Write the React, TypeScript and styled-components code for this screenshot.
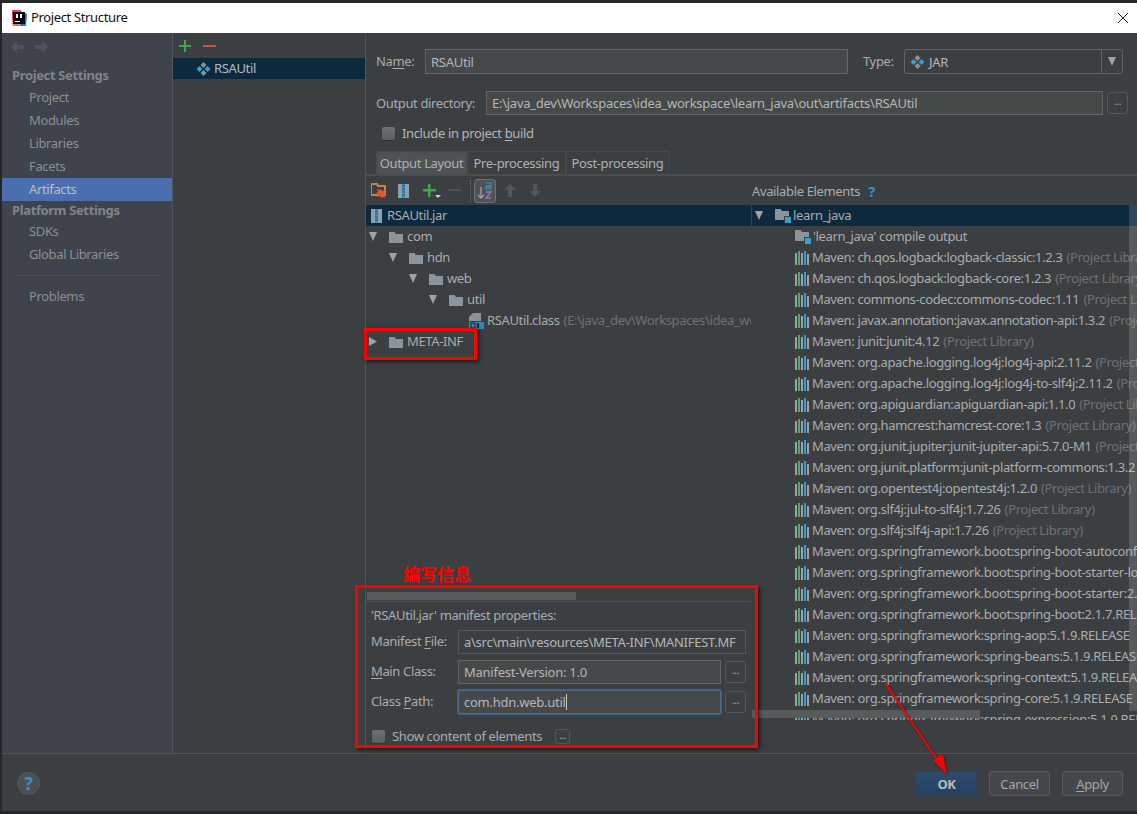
import React from "react";
import styled, { createGlobalStyle } from "styled-components";

const Global = createGlobalStyle`
  html, body { margin: 0; padding: 0; background: #262626; }
  body { font-family: "Noto Sans", "Liberation Sans", sans-serif; font-size: 13px; letter-spacing: -0.36px; color: #b4b7b9; }
  #root { width: 1137px; height: 814px; overflow: hidden; }
  u { text-underline-offset: 2px; text-decoration-thickness: 1px; }
`;

const Root = styled.div`
  position: relative; width: 1137px; height: 814px; box-sizing: border-box;
  padding: 3px 0 3px 2px; background: #262729; overflow: hidden;
`;
const Win = styled.div`display: flex; flex-direction: column; height: 808px; background: #3c3f41;`;
const TitleBar = styled.div`
  height: 30px; flex: none; background: #fff; color: #111; display: flex; align-items: center;
  padding-left: 8px; gap: 3px; font-size: 13px;
`;
const TitleText = styled.span`margin-top: -2px;`;
const CloseBtn = styled.svg`margin-left: auto; margin-right: 8px;`;
const Body = styled.div`display: flex; height: 720px; flex: none;`;

const Sidebar = styled.nav`
  width: 170px; flex: none; background: #3e434c; border-right: 1px solid #54575a; color: #8b9095;
`;
const NavArrows = styled.div`height: 32px; display: flex; align-items: center; gap: 11px; padding: 0 0 4px 9px; box-sizing: border-box;`;
const NavHeader = styled.div<{ $h: number }>`
  height: ${(p) => p.$h}px; line-height: ${(p) => p.$h}px; padding-left: 10px; font-weight: 700; color: #7f858b; font-size: 13px;
`;
const NavItem = styled.div<{ $active?: boolean }>`
  height: 23px; line-height: 23px; padding-left: 27px;
  background: ${(p) => (p.$active ? "#4b6eaf" : "transparent")};
  color: ${(p) => (p.$active ? "#b9c0cc" : "#8b9095")};
`;
const NavDivider = styled.div`height: 1px; margin: 9px 12px 9px 14px; background: #4c5057;`;

const Middle = styled.div`width: 192px; flex: none; border-right: 1px solid #515355; background: #3c3f41;`;
const MiddleTools = styled.div`height: 25px; display: flex; align-items: center; gap: 12px; padding-left: 6px;`;
const Selected = styled.div`
  height: 21px; background: #0d293e; color: #b4bcc2; display: flex; align-items: center; flex: none;
`;
const MiddleRow = styled(Selected)`padding-left: 23px; gap: 3px;`;
const MiddleName = styled.span`margin-top: -2px;`;

const Main = styled.div`flex: 1; min-width: 0; display: flex; flex-direction: column;`;
const FormRow = styled.div<{ $top: number; $h: number }>`
  display: flex; align-items: center; margin-top: ${(p) => p.$top}px; height: ${(p) => p.$h}px; padding-left: 10px; flex: none;
`;
const Label = styled.label<{ $w: number }>`width: ${(p) => p.$w}px; flex: none; white-space: nowrap; color: #a9adb0; margin-top: -2px;`;
const TypeLabel = styled(Label)`margin-left: 15px;`;
const OutputLabel = styled(Label)`margin-top: 0;`;
const Field = styled.div<{ $w: number; $focus?: boolean }>`
  width: ${(p) => p.$w}px; height: 100%; box-sizing: border-box; flex: none; padding: 0 5px; display: flex; align-items: center;
  background: #45494a; letter-spacing: -0.26px;
  border: 1px solid ${(p) => (p.$focus ? "#466d94" : "#646464")};
  border-radius: ${(p) => (p.$focus ? "2px" : "0")};
  box-shadow: ${(p) => (p.$focus ? "0 0 0 1px #3d6185" : "none")};
  color: #b4b7b9; white-space: nowrap; overflow: hidden;
`;
const ReadField = styled(Field)`background: #3c3f41; border-color: #565859;`;
const Caret = styled.span`display: inline-block; width: 1px; height: 16px; background: #c8c8c8;`;
const Combo = styled.div`
  width: 219px; height: 25px; box-sizing: border-box; display: flex; align-items: center; gap: 4px; padding-left: 5px;
  border: 1px solid #646464; border-radius: 3px; background: #3c3f41; color: #b4b7b9;
`;
const ComboArrow = styled.div`
  margin-left: auto; width: 20px; height: 100%; border-left: 1px solid #646464; display: flex; align-items: center; justify-content: center;
`;
const Triangle = styled.span<{ $right?: boolean }>`
  display: inline-block; flex: none; width: 8px; height: 9px; background: #a0a3a5;
  clip-path: ${(p) => (p.$right ? "polygon(0 0, 100% 50%, 0 100%)" : "polygon(0 0, 100% 0, 50% 100%)")};
`;
const DotsBtn = styled.button`
  width: 21px; height: 22px; flex: none; padding: 0 0 5px; margin: 0 0 0 4px; background: #3c3f41; color: #a9adb0; font-size: 10px; line-height: 10px;
  border: 1px solid #565859; border-radius: 3px; font-family: inherit; letter-spacing: inherit;
`;
const SmallDots = styled(DotsBtn)`width: 15px; height: 15px; margin-left: 6px; padding-bottom: 3px;`;
const Box = styled.span`
  width: 13px; height: 13px; flex: none; border-radius: 2px; background: linear-gradient(#6e7072, #5b5e60); box-shadow: 0 1px 1px #2d2f30;
`;
const CheckRow = styled(FormRow)`padding-left: 16px; gap: 7px;`;
const Tabs = styled.div`display: flex; height: 23px; margin-top: 8px; padding-left: 10px; flex: none; border-bottom: 2px solid #4a4d4f;`;
const Tab = styled.div<{ $on?: boolean; $w: number }>`
  width: ${(p) => p.$w}px; box-sizing: border-box; text-align: center; line-height: 23px; white-space: nowrap;
  background: ${(p) => (p.$on ? "#4e5254" : "#3c3f41")};
  border: 1px solid #47494b; border-bottom: none;
  color: #aeb1b3;
`;
const Split = styled.div`flex: 1; min-height: 0; display: flex;`;
const LeftPane = styled.div`width: 385px; flex: none; display: flex; flex-direction: column; min-width: 0;`;
const RightPane = styled.div`position: relative; width: 386px; flex: none; box-sizing: border-box; border-left: 1px solid #3c3f41; overflow: hidden; height: 544px;`;
const Tools = styled.div`height: 29px; display: flex; align-items: center; flex: none;`;
const LeftTree = styled.div`flex: 1; min-height: 0; overflow: hidden;`;
const Row = styled.div<{ $level: number }>`
  display: flex; align-items: center; height: 21px; white-space: nowrap; overflow: hidden;
  padding-left: ${(p) => 3 + p.$level * 20}px; color: #a9adb0;
`;
const JarRow = styled(Selected)`padding-left: 5px;`;
const RightSelRow = styled(Selected)`padding-left: 3px;`;
const ArrowSlot = styled.span`width: 20px; flex: none; display: flex;`;
const Name = styled.span<{ $ml?: number }>`margin: -2px 0 0 ${(p) => p.$ml ?? 4}px; color: #a9adb0;`;
const Hint = styled.span`color: #6f7274; margin: -2px 0 0 4px;`;
const HScroll = styled.div`height: 8px; width: 209px; margin-left: 1px; background: #585b5c; flex: none;`;
const ScrollGap = styled.div`height: 1px; background: #4c4f51; flex: none; margin-top: 1px;`;
const Manifest = styled.div`height: 151px; flex: none; padding: 3px 0 0 5px; box-sizing: border-box;`;
const MTitle = styled.div`height: 20px; line-height: 20px; color: #a9adb0;`;
const MRow = styled.div<{ $top: number }>`display: flex; align-items: center; height: 24px; margin-top: ${(p) => p.$top}px;`;
const MCheck = styled.div`display: flex; align-items: center; height: 20px; margin-top: 12px; padding-left: 1px; gap: 7px; color: #a9adb0;`;
const AvailTitle = styled.div`display: flex; align-items: center; gap: 8px; color: #a9adb0;`;
const QMark = styled.span`color: #3592c4; font-weight: 700; font-size: 15px;`;
const VScroll = styled.div`position: absolute; right: 0; top: 29px; bottom: 9px; width: 8px; background: rgba(255,255,255,.14);`;
const HScrollR = styled.div`position: absolute; left: 0; width: 228px; bottom: 2px; height: 8px; background: #585b5c;`;

const Footer = styled.footer`
  flex: 1; border-top: 1px solid #515355; display: flex; align-items: center; padding: 2px 14px 0 15px; gap: 12px;
`;
const Help = styled.div`
  width: 23px; height: 23px; border-radius: 50%; background: #4a5155; border: 1px solid #54595c; box-sizing: border-box;
  color: #3592c4; font-weight: 800; font-size: 17px; line-height: 21px; text-align: center; margin-right: auto;
`;
const Btn = styled.button<{ $primary?: boolean }>`
  width: 61px; height: 25px; padding: 0; border-radius: 3px; font-family: inherit; font-size: 13px; letter-spacing: inherit;
  font-weight: ${(p) => (p.$primary ? 700 : 400)};
  color: ${(p) => (p.$primary ? "#b9bcbe" : "#a4a7a9")};
  background: ${(p) => (p.$primary ? "linear-gradient(#2f4b6e, #26405f)" : "#45484a")};
  border: 1px solid ${(p) => (p.$primary ? "#2b4462" : "#585b5d")};
`;

const RedBox = styled.div`
  position: absolute; box-sizing: border-box; border: 3px solid #f00; box-shadow: 2px 2px 4px rgba(0,0,0,.6); pointer-events: none;
`;
const MetaBox = styled(RedBox)`left: 364px; top: 328px; width: 113px; height: 32px;`;
const ManifestBox = styled(RedBox)`left: 355px; top: 585px; width: 403px; height: 163px;`;
const Note = styled.div`
  position: absolute; left: 403px; top: 562px; color: #f00; font-weight: 700; font-size: 17px; line-height: 24px; letter-spacing: 0;
  font-family: "Noto Sans CJK SC", sans-serif;
`;
const ArrowOverlay = styled.svg`position: absolute; left: 880px; top: 680px; pointer-events: none; filter: drop-shadow(1px 1px 1px rgba(0,0,0,.5));`;

const Sep = styled.span`width: 0; height: 22px; border-left: 1px dotted #6a6d6f; margin: 0 3px 0 9px;`;
const SortBtn = styled.span`
  width: 22px; height: 24px; box-sizing: border-box; border: 1px solid #6f7375; border-radius: 3px; background: #505355;
  display: flex; align-items: center; justify-content: center;
`;
const ToolIcon = styled.svg<{ $ml: number }>`margin-left: ${(p) => p.$ml}px; flex: none;`;
const ToolSlot = styled.span<{ $ml: number }>`margin-left: ${(p) => p.$ml}px; flex: none; display: flex;`;

const Diamond = () => (
  <svg width="15" height="14" viewBox="0 0 15 14">
    <path d="M7.500 0l3 3-3 3-3-3z" fill="#8a9296" />
    <path d="M7.500 8l3 3-3 3-3-3z" fill="#8a9296" />
    <path d="M3.500 4l3 3-3 3L.5 7z" fill="#3a9ccf" />
    <path d="M11.500 4l3 3-3 3-3-3z" fill="#3a9ccf" />
  </svg>
);
const Folder = () => (
  <svg width="14" height="12" viewBox="0 0 14 12" style={{ flex: "none" }}>
    <path d="M0 1h5.500l1.500 2h7v9H0z" fill="#8a949c" />
  </svg>
);
const ModuleFolder = () => (
  <svg width="16" height="14" viewBox="0 0 16 14" style={{ flex: "none" }}>
    <path d="M0 0h5.500l1.500 2h7v9H0z" fill="#8a949c" />
    <rect x="9" y="7" width="7" height="7" fill="#3c3f41" />
    <rect x="10" y="8" width="6" height="6" fill="#3aa0d0" />
  </svg>
);
const Lib = () => (
  <svg width="14" height="14" viewBox="0 0 14 14" style={{ flex: "none" }}>
    <rect x="0" y="2" width="2" height="12" fill="#9aa3a9" />
    <rect x="3" y="0" width="2" height="14" fill="#59a869" />
    <rect x="6" y="2" width="2" height="12" fill="#9aa3a9" />
    <rect x="9" y="0" width="2" height="14" fill="#3a9ccf" />
    <rect x="12" y="3" width="2" height="11" fill="#9aa3a9" />
  </svg>
);
const Jar = () => (
  <svg width="11" height="14" viewBox="0 0 11 14" style={{ flex: "none" }}>
    <rect x="0" y="0" width="4" height="14" fill="#8fa0ab" />
    <rect x="7" y="0" width="4" height="14" fill="#8fa0ab" />
    <rect x="4" y="0" width="3" height="14" fill="#3592c4" />
    <path d="M4 2h3M4 5h3M4 8h3M4 11h3" stroke="#1f5c7c" strokeWidth="1" />
  </svg>
);
const ClassIcon = () => (
  <svg width="16" height="16" viewBox="0 0 16 16" style={{ flex: "none" }}>
    <path d="M4 0h8v8H0V4z" fill="#8a949c" />
    <rect x="0" y="9" width="15" height="7" fill="#2f88b5" />
    <rect x="2" y="10" width="4" height="5" fill="none" stroke="#0d293e" />
    <rect x="8" y="10" width="2" height="5" fill="#0d293e" />
  </svg>
);
const NavArrow = ({ flip }: { flip?: boolean }) => (
  <svg width="13" height="12" viewBox="0 0 13 12" style={{ transform: flip ? "scaleX(-1)" : undefined }}>
    <path d="M6 0L0 6l6 6V8h7V4H6z" fill="#50545a" />
  </svg>
);
const Logo = () => (
  <svg width="18" height="18" viewBox="0 0 18 18">
    <path d="M2 1h9l-3 9-6 3z" fill="#f9317a" />
    <path d="M1 8l4 9h6z" fill="#fc5a7d" />
    <path d="M1 13l2 4h5z" fill="#fc801d" />
    <path d="M10 2l7 3-1 12h-6z" fill="#087cfa" />
    <rect x="3" y="3" width="12" height="12" fill="#000" />
    <rect x="6" y="5" width="2" height="4" fill="#fff" />
    <rect x="10" y="5" width="2" height="4" fill="#fff" />
    <rect x="5" y="12" width="5" height="1" fill="#fff" />
  </svg>
);

const libs: [string, string][] = [
  ["ch.qos.logback:logback-classic:1.2.3", "(Project Library)"],
  ["ch.qos.logback:logback-core:1.2.3", "(Project Library)"],
  ["commons-codec:commons-codec:1.11", "(Project Library)"],
  ["javax.annotation:javax.annotation-api:1.3.2", "(Project Library)"],
  ["junit:junit:4.12", "(Project Library)"],
  ["org.apache.logging.log4j:log4j-api:2.11.2", "(Project Library)"],
  ["org.apache.logging.log4j:log4j-to-slf4j:2.11.2", "(Project Library)"],
  ["org.apiguardian:apiguardian-api:1.1.0", "(Project Library)"],
  ["org.hamcrest:hamcrest-core:1.3", "(Project Library)"],
  ["org.junit.jupiter:junit-jupiter-api:5.7.0-M1", "(Project Library)"],
  ["org.junit.platform:junit-platform-commons:1.3.2", "(Project Library)"],
  ["org.opentest4j:opentest4j:1.2.0", "(Project Library)"],
  ["org.slf4j:jul-to-slf4j:1.7.26", "(Project Library)"],
  ["org.slf4j:slf4j-api:1.7.26", "(Project Library)"],
  ["org.springframework.boot:spring-boot-autoconfigure:2.1.7.RELEASE", ""],
  ["org.springframework.boot:spring-boot-starter-logging:2.1.7.RELEASE", ""],
  ["org.springframework.boot:spring-boot-starter:2.1.7.RELEASE", ""],
  ["org.springframework.boot:spring-boot:2.1.7.RELEASE", ""],
  ["org.springframework:spring-aop:5.1.9.RELEASE", ""],
  ["org.springframework:spring-beans:5.1.9.RELEASE", ""],
  ["org.springframework:spring-context:5.1.9.RELEASE", ""],
  ["org.springframework:spring-core:5.1.9.RELEASE", ""],
  ["org.springframework:spring-expression:5.1.9.RELEASE", ""],
];

const tree = [
  { level: 0, name: "com" },
  { level: 1, name: "hdn" },
  { level: 2, name: "web" },
  { level: 3, name: "util" },
];

export default function App() {
  return (
    <Root>
      <Global />
      <Win>
        <TitleBar>
          <Logo />
          <TitleText>Project Structure</TitleText>
          <CloseBtn width="12" height="12" viewBox="0 0 12 12">
            <path d="M1 1l10 10M11 1L1 11" stroke="#222" strokeWidth="1" fill="none" />
          </CloseBtn>
        </TitleBar>
        <Body>
          <Sidebar>
            <NavArrows>
              <NavArrow />
              <NavArrow flip />
            </NavArrows>
            <NavHeader $h={21}>Project Settings</NavHeader>
            <NavItem>Project</NavItem>
            <NavItem>Modules</NavItem>
            <NavItem>Libraries</NavItem>
            <NavItem>Facets</NavItem>
            <NavItem $active>Artifacts</NavItem>
            <NavHeader $h={19}>Platform Settings</NavHeader>
            <NavItem>SDKs</NavItem>
            <NavItem>Global Libraries</NavItem>
            <NavDivider />
            <NavItem>Problems</NavItem>
          </Sidebar>
          <Middle>
            <MiddleTools>
              <svg width="12" height="12" viewBox="0 0 12 12"><path d="M5 0h2v5h5v2H7v5H5V7H0V5h5z" fill="#3fa64a" /></svg>
              <svg width="13" height="12" viewBox="0 0 13 12"><rect y="5" width="13" height="2" fill="#c75450" /></svg>
            </MiddleTools>
            <MiddleRow>
              <Diamond />
              <MiddleName>RSAUtil</MiddleName>
            </MiddleRow>
          </Middle>
          <Main>
            <FormRow $top={16} $h={25}>
              <Label $w={49}>Na<u>m</u>e:</Label>
              <Field $w={423}>RSAUtil</Field>
              <TypeLabel $w={41}>Type:</TypeLabel>
              <Combo>
                <Diamond />
                JAR
                <ComboArrow><Triangle /></ComboArrow>
              </Combo>
            </FormRow>
            <FormRow $top={17} $h={24}>
              <OutputLabel $w={110}>Output directory:</OutputLabel>
              <Field $w={617}>E:\java_dev\Workspaces\idea_workspace\learn_java\out\artifacts\RSAUtil</Field>
              <DotsBtn>...</DotsBtn>
            </FormRow>
            <CheckRow $top={8} $h={20}>
              <Box />
              <span>Include in project <u>b</u>uild</span>
            </CheckRow>
            <Tabs>
              <Tab $on $w={91}>Output Layout</Tab>
              <Tab $w={99}>Pre-processing</Tab>
              <Tab $w={103}>Post-processing</Tab>
            </Tabs>
            <Split>
              <LeftPane>
                <Tools>
                  <ToolIcon $ml={5} width="16" height="15" viewBox="0 0 16 15">
                    <path d="M0 1h6l1 2h7v9H0z" fill="none" stroke="#b98a45" strokeWidth="2" />
                    <path d="M10 6l1 2 3-1-1 3 2 1-2 1 1 3-3-1-1 1-1-2-3 1 1-3-2-1 2-1-1-3 3 1z" fill="#e8542f" />
                  </ToolIcon>
                  <ToolSlot $ml={11}><Jar /></ToolSlot>
                  <ToolIcon $ml={14} width="18" height="16" viewBox="0 0 18 16">
                    <path d="M5 1h2.500v5H13v2.500H7.500V14H5V8.500H0V6h5z" fill="#3fa64a" />
                    <path d="M12 12h6l-3 3z" fill="#d0d0d0" />
                  </ToolIcon>
                  <ToolIcon $ml={7} width="13" height="3" viewBox="0 0 13 3"><rect width="13" height="2" fill="#505355" /></ToolIcon>
                  <Sep />
                  <SortBtn>
                    <svg width="18" height="18" viewBox="0 0 18 18">
                      <path d="M5 5v11M2 13l3 3 3-3" stroke="#a0a3a5" strokeWidth="1.300" fill="none" />
                      <path d="M10 1h5v6h-5v-2h4M14 4h-4" stroke="#3592c4" strokeWidth="1.200" fill="none" />
                      <path d="M10 10h5l-5 6h5" stroke="#9876c9" strokeWidth="1.300" fill="none" />
                    </svg>
                  </SortBtn>
                  <ToolIcon $ml={8} width="12" height="13" viewBox="0 0 12 13"><path d="M6 0l6 6H8v7H4V6H0z" fill="#545759" /></ToolIcon>
                  <ToolIcon $ml={13} width="12" height="13" viewBox="0 0 12 13"><path d="M6 13l6-6H8V0H4v7H0z" fill="#545759" /></ToolIcon>
                </Tools>
                <JarRow>
                  <Jar />
                  <Name $ml={5}>RSAUtil.jar</Name>
                </JarRow>
                <LeftTree>
                  {tree.map((t) => (
                    <Row key={t.name} $level={t.level}>
                      <ArrowSlot><Triangle /></ArrowSlot>
                      <Folder />
                      <Name>{t.name}</Name>
                    </Row>
                  ))}
                  <Row $level={4}>
                    <ArrowSlot />
                    <ClassIcon />
                    <Name $ml={2}>RSAUtil.class</Name>
                    <Hint>(E:\java_dev\Workspaces\idea_workspace\learn_java)</Hint>
                  </Row>
                  <Row $level={0}>
                    <ArrowSlot><Triangle $right /></ArrowSlot>
                    <Folder />
                    <Name>META-INF</Name>
                  </Row>
                </LeftTree>
                <HScroll />
                <ScrollGap />
                <Manifest>
                  <MTitle>'RSAUtil.jar' manifest properties:</MTitle>
                  <MRow $top={5}>
                    <Label $w={87}>Manifest <u>F</u>ile:</Label>
                    <ReadField $w={288}>a\src\main\resources\META-INF\MANIFEST.MF</ReadField>
                  </MRow>
                  <MRow $top={6}>
                    <Label $w={87}><u>M</u>ain Class:</Label>
                    <Field $w={263}>Manifest-Version: 1.0</Field>
                    <DotsBtn>...</DotsBtn>
                  </MRow>
                  <MRow $top={6}>
                    <Label $w={87}>Class <u>P</u>ath:</Label>
                    <Field $w={263} $focus>com.hdn.web.util<Caret /></Field>
                    <DotsBtn>...</DotsBtn>
                  </MRow>
                  <MCheck>
                    <Box />
                    <span>Show content of elements</span>
                    <SmallDots>...</SmallDots>
                  </MCheck>
                </Manifest>
              </LeftPane>
              <RightPane>
                <Tools>
                  <AvailTitle>Available Elements <QMark>?</QMark></AvailTitle>
                </Tools>
                <RightSelRow>
                  <ArrowSlot><Triangle /></ArrowSlot>
                  <ModuleFolder />
                  <Name $ml={2}>learn_java</Name>
                </RightSelRow>
                <Row $level={1}>
                  <ArrowSlot />
                  <ModuleFolder />
                  <Name $ml={2}>'learn_java' compile output</Name>
                </Row>
                {libs.map(([n, h]) => (
                  <Row key={n} $level={1}>
                    <ArrowSlot />
                    <Lib />
                    <Name $ml={3}>Maven: {n}</Name>
                    {h && <Hint>{h}</Hint>}
                  </Row>
                ))}
                <VScroll />
                <HScrollR />
              </RightPane>
            </Split>
          </Main>
        </Body>
        <Footer>
          <Help>?</Help>
          <Btn $primary>OK</Btn>
          <Btn>Cancel</Btn>
          <Btn><u>A</u>pply</Btn>
        </Footer>
      </Win>
      <MetaBox />
      <ManifestBox />
      <Note>编写信息</Note>
      <ArrowOverlay width="80" height="100" viewBox="0 0 80 100">
        <path d="M6 4L60 84" stroke="#f00" strokeWidth="2" fill="none" />
        <path d="M67 95L53 80l10-6z" fill="#f00" />
      </ArrowOverlay>
    </Root>
  );
}
